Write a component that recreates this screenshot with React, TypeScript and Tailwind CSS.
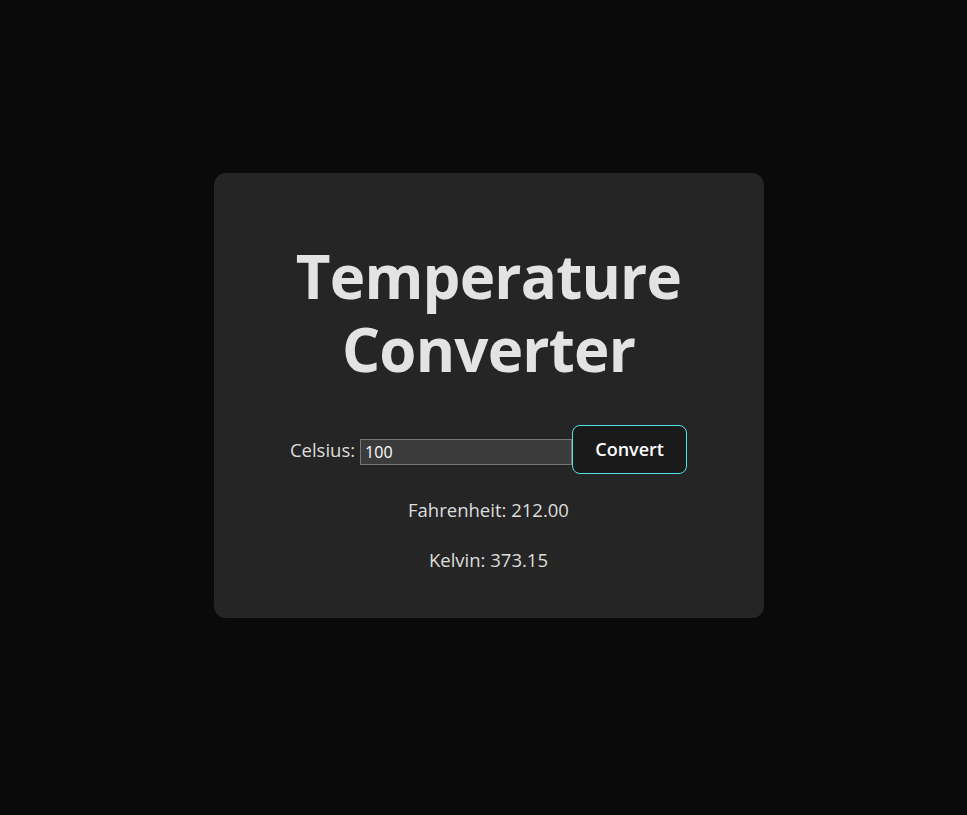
import React, { useState } from "react";

const App: React.FC = () => {
  const [celsius, setCelsius] = useState("100");
  const [result, setResult] = useState({ f: "212.00", k: "373.15" });

  const convert = () => {
    const c = parseFloat(celsius);
    if (isNaN(c)) return;
    setResult({ f: (c * 9 / 5 + 32).toFixed(2), k: (c + 273.15).toFixed(2) });
  };

  return (
    <div
      className="min-h-screen w-full bg-[#0a0a0a] flex justify-center items-start pt-[173px] pl-[10px]"
      style={{ fontFamily: '"Open Sans", "Noto Sans", sans-serif' }}
    >
      <div className="w-[550px] h-[445px] bg-[#252525] rounded-xl flex flex-col items-center pt-[67px] text-[#dedede]">
        <h1 className="text-[60px] leading-[73px] font-bold text-center text-[#e3e3e3] tracking-[-0.8px]">
          Temperature
          <br />
          Converter
        </h1>
        <div className="flex items-center mt-[39px]">
          <label htmlFor="celsius" className="text-[18.5px] mr-[5px]">
            Celsius:
          </label>
          <input
            id="celsius"
            type="text"
            value={celsius}
            onChange={(e) => setCelsius(e.target.value)}
            className="w-[212px] h-[26px] mt-[4px] bg-[#3b3b3b] border border-[#767676] text-[16px] text-white px-[4px] outline-none"
          />
          <button
            onClick={convert}
            className="w-[115px] h-[49px] rounded-lg border border-[#4ee3ea] bg-[#1a1a1a] text-[18px] font-semibold text-white"
          >
            Convert
          </button>
        </div>
        <p className="text-[18.5px] mt-[22px]">Fahrenheit: {result.f}</p>
        <p className="text-[18.5px] mt-[22px]">Kelvin: {result.k}</p>
      </div>
    </div>
  );
};

export default App;
